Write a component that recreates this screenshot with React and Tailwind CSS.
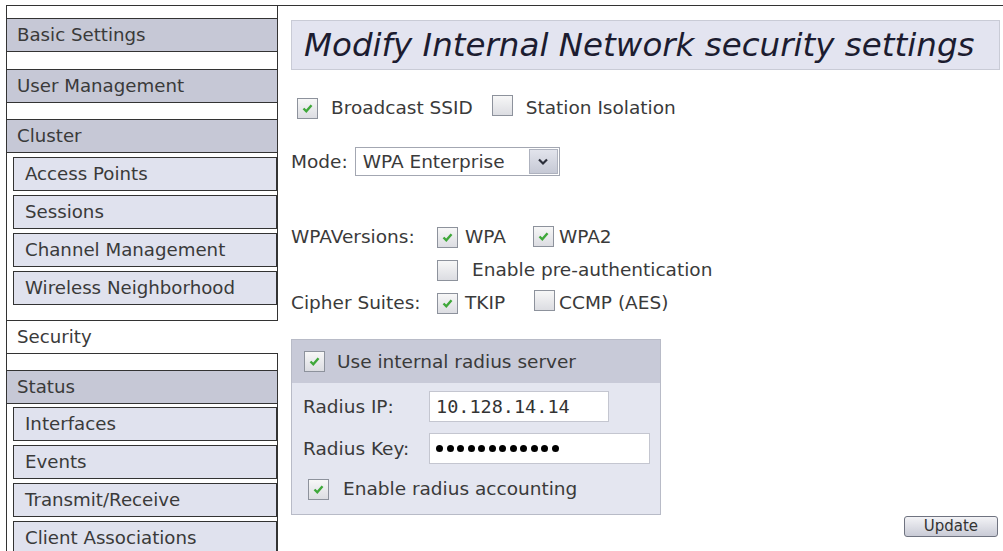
import React from 'react';

const font = { fontFamily: '"DejaVu Sans", Verdana, sans-serif' };

const Check = ({ checked }) => (
  <span className="inline-flex h-[21px] w-[21px] shrink-0 items-center justify-center border border-[#8d929c] bg-gradient-to-b from-[#f7f7f7] to-[#dcdde2]">
    {checked && (
      <svg width="13" height="13" viewBox="0 0 13 13">
        <path d="M2.5 6.5 L5.3 9.3 L10.5 3.3" fill="none" stroke="#3fa83a" strokeWidth="2.4" />
      </svg>
    )}
  </span>
);

const Top = ({ label, active }) => (
  <div
    className={
      active
        ? 'flex h-[34px] items-center border-y border-[#333] bg-white pl-[10px]'
        : 'flex h-[34px] items-center border-y border-r border-[#333] bg-[#c6c8d6] pl-[10px]'
    }
  >
    {label}
  </div>
);

const Sub = ({ label }) => (
  <div className="ml-[6px] flex h-[34px] items-center border border-[#333] bg-[#e0e2ee] pl-[11px]">{label}</div>
);

const Gap = ({ h }) => <div className={`border-r border-[#333] bg-white ${h}`} />;

export default function App() {
  return (
    <div className="h-[551px] w-[1003px] overflow-hidden bg-white text-[18.5px] text-[#3a3a3a]" style={font}>
      <div className="mt-[5px] ml-[6px] flex border-t border-[#333]">
        <aside className="flex w-[272px] shrink-0 flex-col border-l border-[#333] text-[18.2px]">
          <Gap h="h-[12px]" />
          <Top label="Basic Settings" />
          <Gap h="h-[17px]" />
          <Top label="User Management" />
          <Gap h="h-[16px]" />
          <Top label="Cluster" />
          <div className="flex flex-col gap-[4px] border-r border-[#333] pt-[4px]">
            <Sub label="Access Points" />
            <Sub label="Sessions" />
            <Sub label="Channel Management" />
            <Sub label="Wireless Neighborhood" />
          </div>
          <Gap h="h-[15px]" />
          <Top label="Security" active />
          <Gap h="h-[16px]" />
          <Top label="Status" />
          <div className="flex flex-col gap-[4px] border-r border-[#333] pt-[3px]">
            <Sub label="Interfaces" />
            <Sub label="Events" />
            <Sub label="Transmit/Receive" />
            <Sub label="Client Associations" />
          </div>
        </aside>

        <main className="flex-1 pl-[13px] pr-[3px] pt-[14px] leading-[22px]">
          <div className="flex h-[50px] items-center border border-[#c9cbd6] bg-[#e3e4f0] pl-[12px] text-[32.5px] italic text-[#1c1c30]">
            Modify Internal Network security settings
          </div>

          <div className="mt-[27px] flex h-[22px] items-center pl-[6px]">
            <Check checked />
            <span className="ml-[13px]">Broadcast SSID</span>
            <span className="ml-[19px]"><Check /></span>
            <span className="ml-[13px]">Station Isolation</span>
          </div>

          <div className="mt-[28px] flex items-center">
            <span>Mode:</span>
            <div className="ml-[7px] flex h-[29px] w-[205px] items-stretch border border-[#a3a7b2] bg-white">
              <span className="flex flex-1 items-center pl-[7px]">WPA Enterprise</span>
              <span className="my-[1px] mr-[1px] flex w-[29px] items-center justify-center border border-[#aeb2be] bg-gradient-to-b from-[#e2e4ec] to-[#c6c9d5]">
                <svg width="12" height="9" viewBox="0 0 12 9">
                  <path d="M2 2.5 L6 6.5 L10 2.5" fill="none" stroke="#2c2f3a" strokeWidth="2.2" />
                </svg>
              </span>
            </div>
          </div>

          <div className="mt-[50px] grid grid-cols-[146px_1fr] gap-y-[11px]">
            <span className="flex h-[22px] items-center">WPAVersions:</span>
            <div className="flex h-[22px] items-center">
              <Check checked />
              <span className="ml-[7px]">WPA</span>
              <span className="ml-[27px]"><Check checked /></span>
              <span className="ml-[5px]">WPA2</span>
            </div>
            <span />
            <div className="flex h-[22px] items-center">
              <Check />
              <span className="ml-[14px]">Enable pre-authentication</span>
            </div>
            <span className="flex h-[22px] items-center">Cipher Suites:</span>
            <div className="flex h-[22px] items-center">
              <Check checked />
              <span className="ml-[7px]">TKIP</span>
              <span className="ml-[29px]"><Check /></span>
              <span className="ml-[4px]">CCMP (AES)</span>
            </div>
          </div>

          <div className="mt-[25px] w-[370px] border border-[#b8bbc7] bg-[#e4e6f0]">
            <div className="flex h-[43px] items-center bg-[#c8cad8] pl-[12px]">
              <Check checked />
              <span className="ml-[12px]">Use internal radius server</span>
            </div>
            <div className="flex items-center pl-[11px] pt-[8px]">
              <span className="w-[126px]">Radius IP:</span>
              <div
                className="flex h-[31px] w-[180px] items-center border border-[#c4c6d0] bg-white pl-[6px] text-[18.5px] text-[#333]"
                style={{ fontFamily: '"DejaVu Sans Mono", monospace' }}
              >
                10.128.14.14
              </div>
            </div>
            <div className="mt-[11px] flex items-center pl-[11px]">
              <span className="w-[126px]">Radius Key:</span>
              <div className="flex h-[31px] w-[221px] items-center gap-[3.5px] border border-[#c4c6d0] bg-white pl-[6px]">
                {Array.from({ length: 12 }).map((_, i) => (
                  <span key={i} className="h-[7px] w-[7px] rounded-full bg-black" />
                ))}
              </div>
            </div>
            <div className="flex items-center pb-[14px] pl-[16px] pt-[14px]">
              <Check checked />
              <span className="ml-[14px]">Enable radius accounting</span>
            </div>
          </div>

          <div className="mt-[1px] flex justify-end pr-[2px]">
            <button className="h-[21px] rounded-[3px] border border-[#6f7380] bg-gradient-to-b from-[#f3f3f6] to-[#c9cbd6] px-[19px] text-[15px] leading-none text-[#333]">
              Update
            </button>
          </div>
        </main>
      </div>
    </div>
  );
}
